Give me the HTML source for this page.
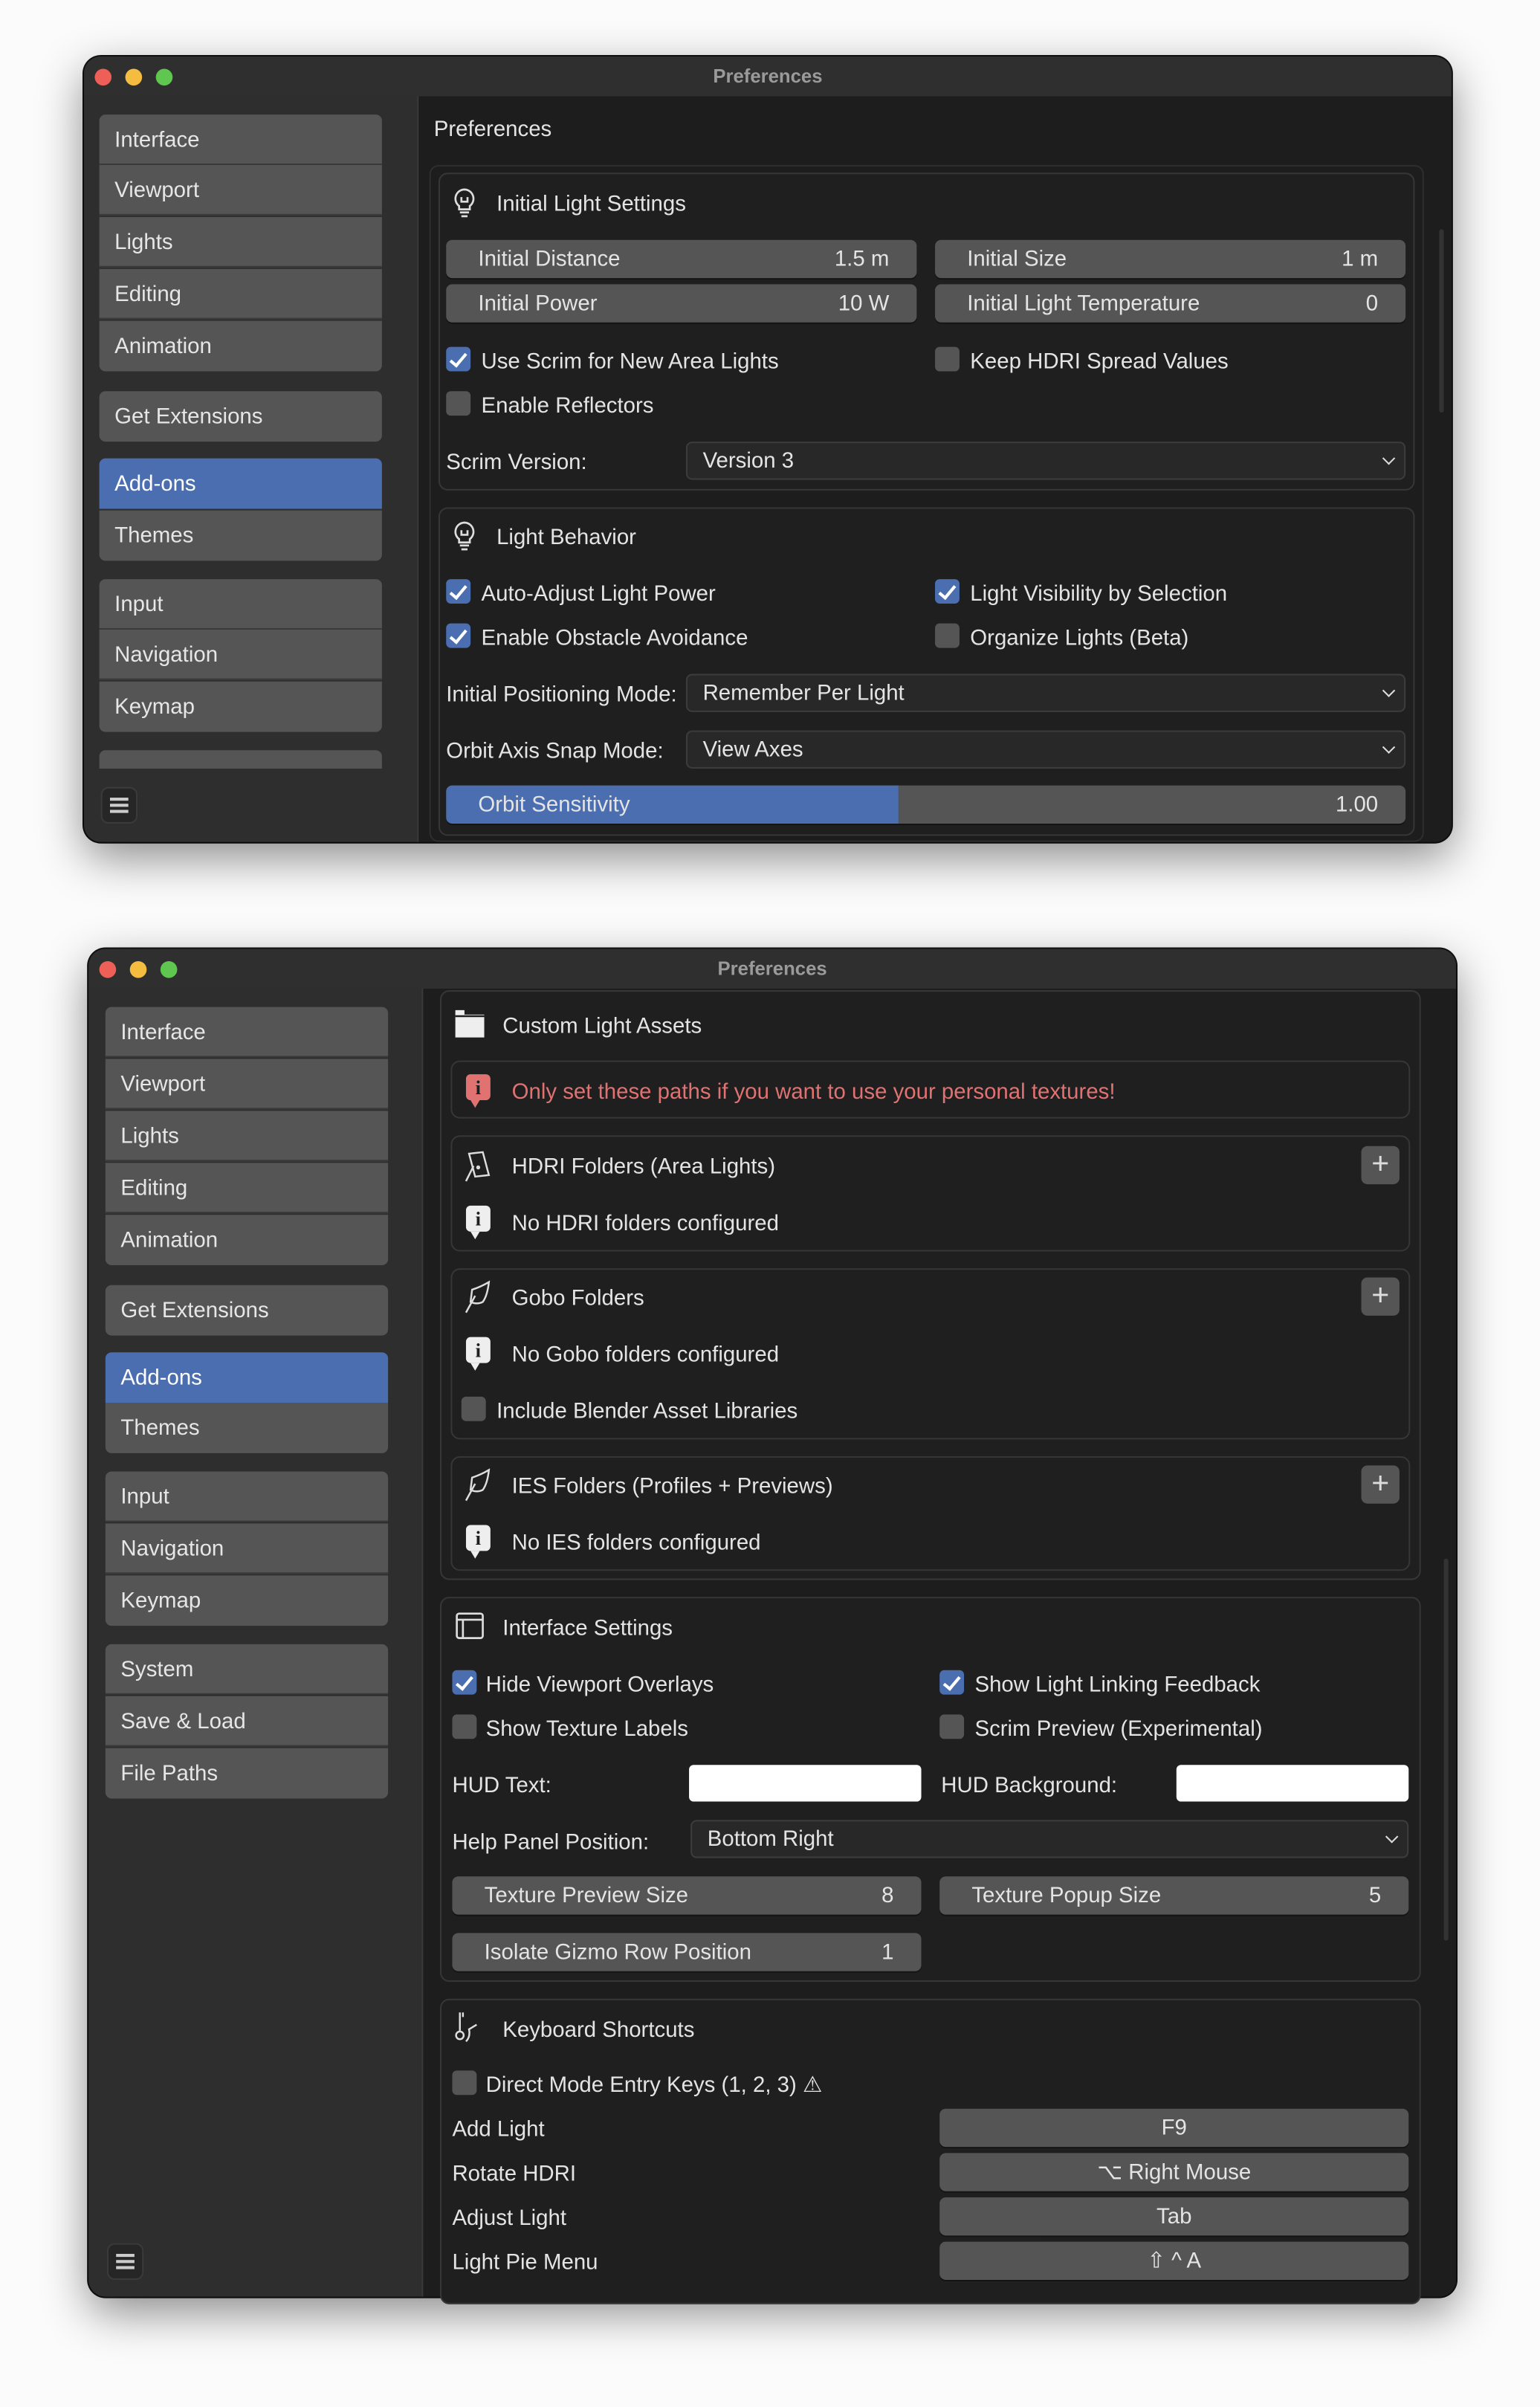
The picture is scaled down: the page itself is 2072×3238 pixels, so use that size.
<!DOCTYPE html>
<html><head><meta charset="utf-8">
<style>
html,body{margin:0;padding:0;background:#fbfbfb;overflow:hidden;width:2072px;height:3237px}
#s{position:absolute;left:0;top:0;width:1008px;height:1575px;transform:scale(2.0556);transform-origin:0 0;font-family:"Liberation Sans",sans-serif;font-size:14.3px;color:#e4e4e4}
.a{position:absolute}
.win{position:absolute;background:#2e2e2e;border-radius:11px;box-shadow:0 10px 30px rgba(0,0,0,.45),0 0 0 1px #111;overflow:hidden}
.tb{position:absolute;left:0;top:0;right:0;height:26px;background:#2f2f2f;text-align:center;line-height:26px;font-weight:bold;font-size:12.5px;color:#9a9a9a}
.dot{position:absolute;top:8px;width:11px;height:11px;border-radius:50%}
.nav{position:absolute;background:#555;height:33px;line-height:35px;padding-left:10px;box-sizing:border-box;color:#e6e6e6;border-bottom:1px solid #3a3a3a}
.sel{background:#4a6eb0;color:#fff}
.main{position:absolute;background:#1d1d1d;border-left:1px solid #3a3a3a}
.pan{position:absolute;border:1px solid #363636;border-radius:6px;background:#1f1f1f;box-sizing:border-box}
.w{position:absolute;background:#555;border-radius:4px;height:25px;line-height:26px;box-sizing:border-box;box-shadow:0 1px 0 #141414}
.w .l{position:absolute;left:21px}
.w .r{position:absolute;right:18px}
.dd{position:absolute;background:#282828;border:1px solid #3c3c3c;border-radius:4px;height:25px;line-height:24px;box-sizing:border-box;padding-left:10px}
.dd:after{content:"";position:absolute;right:7px;top:7px;width:5px;height:5px;border-right:1.5px solid #ddd;border-bottom:1.5px solid #ddd;transform:rotate(45deg)}
.cb{position:absolute;width:16px;height:16px;border-radius:3px;background:#555;box-sizing:border-box}
.cb.on{background:#4a6eb0}
.cb.on:after{content:"";position:absolute;left:5px;top:1.5px;width:4px;height:9px;border-right:2px solid #fff;border-bottom:2px solid #fff;transform:rotate(40deg)}
.t{position:absolute;white-space:nowrap;line-height:18px;margin-top:1.5px}
.kb{position:absolute;left:615px;width:307px;background:#555;border-radius:4px;height:25px;line-height:26px;text-align:center;box-shadow:0 1px 0 #141414}
.plus{position:absolute;width:25px;height:25px;background:#555;border-radius:4px;text-align:center;line-height:24px;font-size:20px;color:#ddd}
.info{position:absolute;width:16px;height:17px;background:#eee;border-radius:3px;color:#1f1f1f;font-weight:bold;font-family:"Liberation Serif",serif;font-size:13px;text-align:center;line-height:17px}
.info:after{content:"";position:absolute;left:3px;bottom:-5px;border-left:3px solid transparent;border-right:3px solid transparent;border-top:5px solid #eee}
.info.red:after{border-top-color:#e07272}
.ham{position:absolute;width:22px;height:22px;border-radius:5px;background:#262626;border:1px solid #3a3a3a}
.ham i{position:absolute;left:5px;width:12px;height:1.5px;background:#ccc}
</style></head><body><div id="s">

<!-- WINDOW 1 -->
<div class="win" style="left:55px;top:37px;width:895px;height:514px">
 <div class="tb">Preferences</div>
 <div class="dot" style="left:7px;background:#ed5f57"></div>
 <div class="dot" style="left:27px;background:#f5bd3f"></div>
 <div class="dot" style="left:47px;background:#5fc74f"></div>
 <div class="main" style="left:218px;top:26px;width:677px;height:488px"></div>
</div>
<div class="nav" style="left:65px;top:75px;width:185px;border-radius:4px 4px 0 0">Interface</div>
<div class="nav" style="left:65px;top:108px;width:185px">Viewport</div>
<div class="nav" style="left:65px;top:142px;width:185px">Lights</div>
<div class="nav" style="left:65px;top:176px;width:185px">Editing</div>
<div class="nav" style="left:65px;top:210px;width:185px;border-radius:0 0 4px 4px;border:0">Animation</div>
<div class="nav" style="left:65px;top:256px;width:185px;border-radius:4px;border:0">Get Extensions</div>
<div class="nav sel" style="left:65px;top:300px;width:185px;border-radius:4px 4px 0 0;border:0">Add-ons</div>
<div class="nav" style="left:65px;top:334px;width:185px;border-radius:0 0 4px 4px;border:0">Themes</div>
<div class="nav" style="left:65px;top:379px;width:185px;border-radius:4px 4px 0 0">Input</div>
<div class="nav" style="left:65px;top:412px;width:185px">Navigation</div>
<div class="nav" style="left:65px;top:446px;width:185px;border-radius:0 0 4px 4px;border:0">Keymap</div>
<div class="nav" style="left:65px;top:491px;width:185px;height:12px;border-radius:4px 4px 0 0;border:0"></div>
<div class="ham" style="left:66px;top:515px"><i style="top:6px"></i><i style="top:10px"></i><i style="top:14px"></i></div>

<div class="t" style="left:284px;top:74px">Preferences</div>
<div class="pan" style="left:281px;top:108px;width:651px;height:443px;background:#1d1d1d;border-color:#2e2e2e"></div>
<div class="pan" style="left:287px;top:113px;width:639px;height:208px"></div>
<svg class="a" style="left:295px;top:122px" width="18" height="22" viewBox="0 0 18 22"><path d="M9 2a6 6 0 0 0-3.5 10.8V15h7v-2.2A6 6 0 0 0 9 2z" fill="none" stroke="#ddd" stroke-width="1.3"/><path d="M6 17h6M7 19.5h4M7 7v3h4V7" stroke="#ddd" stroke-width="1.3" fill="none"/></svg>
<div class="t" style="left:325px;top:123px">Initial Light Settings</div>
<div class="w" style="left:292px;top:157px;width:308px"><span class="l">Initial Distance</span><span class="r">1.5 m</span></div>
<div class="w" style="left:612px;top:157px;width:308px"><span class="l">Initial Size</span><span class="r">1 m</span></div>
<div class="w" style="left:292px;top:186px;width:308px"><span class="l">Initial Power</span><span class="r">10 W</span></div>
<div class="w" style="left:612px;top:186px;width:308px"><span class="l">Initial Light Temperature</span><span class="r">0</span></div>
<div class="cb on" style="left:292px;top:227px"></div><div class="t" style="left:315px;top:226px">Use Scrim for New Area Lights</div>
<div class="cb" style="left:612px;top:227px"></div><div class="t" style="left:635px;top:226px">Keep HDRI Spread Values</div>
<div class="cb" style="left:292px;top:256px"></div><div class="t" style="left:315px;top:255px">Enable Reflectors</div>
<div class="t" style="left:292px;top:292px">Scrim Version:</div>
<div class="dd" style="left:449px;top:289px;width:471px">Version 3</div>

<div class="pan" style="left:287px;top:332px;width:639px;height:215px"></div>
<svg class="a" style="left:295px;top:340px" width="18" height="22" viewBox="0 0 18 22"><path d="M9 2a6 6 0 0 0-3.5 10.8V15h7v-2.2A6 6 0 0 0 9 2z" fill="none" stroke="#ddd" stroke-width="1.3"/><path d="M6 17h6M7 19.5h4M7 7v3h4V7" stroke="#ddd" stroke-width="1.3" fill="none"/></svg>
<div class="t" style="left:325px;top:341px">Light Behavior</div>
<div class="cb on" style="left:292px;top:379px"></div><div class="t" style="left:315px;top:378px">Auto-Adjust Light Power</div>
<div class="cb on" style="left:612px;top:379px"></div><div class="t" style="left:635px;top:378px">Light Visibility by Selection</div>
<div class="cb on" style="left:292px;top:408px"></div><div class="t" style="left:315px;top:407px">Enable Obstacle Avoidance</div>
<div class="cb" style="left:612px;top:408px"></div><div class="t" style="left:635px;top:407px">Organize Lights (Beta)</div>
<div class="t" style="left:292px;top:444px">Initial Positioning Mode:</div>
<div class="dd" style="left:449px;top:441px;width:471px">Remember Per Light</div>
<div class="t" style="left:292px;top:481px">Orbit Axis Snap Mode:</div>
<div class="dd" style="left:449px;top:478px;width:471px">View Axes</div>
<div class="w" style="left:292px;top:514px;width:628px;overflow:hidden"><div class="a" style="left:0;top:0;width:296px;height:25px;background:#4a6eb0"></div><span class="l">Orbit Sensitivity</span><span class="r">1.00</span></div>
<div class="a" style="left:942px;top:150px;width:3px;height:120px;background:#333;border-radius:2px"></div>

<!-- WINDOW 2 -->
<div class="win" style="left:58px;top:621px;width:895px;height:882px">
 <div class="tb">Preferences</div>
 <div class="dot" style="left:7px;background:#ed5f57"></div>
 <div class="dot" style="left:27px;background:#f5bd3f"></div>
 <div class="dot" style="left:47px;background:#5fc74f"></div>
 <div class="main" style="left:218px;top:26px;width:677px;height:856px"></div>
</div>
<div class="nav" style="left:69px;top:659px;width:185px;border-radius:4px 4px 0 0">Interface</div>
<div class="nav" style="left:69px;top:693px;width:185px">Viewport</div>
<div class="nav" style="left:69px;top:727px;width:185px">Lights</div>
<div class="nav" style="left:69px;top:761px;width:185px">Editing</div>
<div class="nav" style="left:69px;top:795px;width:185px;border-radius:0 0 4px 4px;border:0">Animation</div>
<div class="nav" style="left:69px;top:841px;width:185px;border-radius:4px;border:0">Get Extensions</div>
<div class="nav sel" style="left:69px;top:885px;width:185px;border-radius:4px 4px 0 0;border:0">Add-ons</div>
<div class="nav" style="left:69px;top:918px;width:185px;border-radius:0 0 4px 4px;border:0">Themes</div>
<div class="nav" style="left:69px;top:963px;width:185px;border-radius:4px 4px 0 0">Input</div>
<div class="nav" style="left:69px;top:997px;width:185px">Navigation</div>
<div class="nav" style="left:69px;top:1031px;width:185px;border-radius:0 0 4px 4px;border:0">Keymap</div>
<div class="nav" style="left:69px;top:1076px;width:185px;border-radius:4px 4px 0 0">System</div>
<div class="nav" style="left:69px;top:1110px;width:185px">Save &amp; Load</div>
<div class="nav" style="left:69px;top:1144px;width:185px;border-radius:0 0 4px 4px;border:0">File Paths</div>
<div class="ham" style="left:70px;top:1468px"><i style="top:6px"></i><i style="top:10px"></i><i style="top:14px"></i></div>

<div class="pan" style="left:288px;top:648px;width:642px;height:386px"></div>
<svg class="a" style="left:298px;top:661px" width="19" height="18" viewBox="0 0 19 18"><path d="M0 0h6v3h13v15H0z" fill="#eee"/><path d="M0 4h19" stroke="#1f1f1f" stroke-width="1.2"/></svg>
<div class="t" style="left:329px;top:661px">Custom Light Assets</div>
<div class="pan" style="left:295px;top:694px;width:628px;height:38px"></div>
<div class="info red" style="left:305px;top:703px;background:#e07272">i</div>
<div class="t" style="left:335px;top:704px;color:#e07272">Only set these paths if you want to use your personal textures!</div>

<div class="pan" style="left:295px;top:743px;width:628px;height:76px"></div>
<svg class="a" style="left:304px;top:752px" width="18" height="22" viewBox="0 0 18 22"><path d="M3 3l9-1 4 15-9 1z" fill="none" stroke="#ddd" stroke-width="1.2"/><path d="M1 21l5-10" stroke="#ddd" stroke-width="1.2"/><circle cx="9" cy="12" r="1.3" fill="#ddd"/></svg>
<div class="t" style="left:335px;top:753px">HDRI Folders (Area Lights)</div>
<div class="plus" style="left:891px;top:750px">+</div>
<div class="info" style="left:305px;top:789px">i</div>
<div class="t" style="left:335px;top:790px">No HDRI folders configured</div>

<div class="pan" style="left:295px;top:830px;width:628px;height:112px"></div>
<svg class="a" style="left:304px;top:838px" width="18" height="22" viewBox="0 0 18 22"><path d="M5 6q6-2 11-5-1 9-4 13-4 2-8 0z" fill="none" stroke="#ddd" stroke-width="1.2"/><path d="M1 21l6-11" stroke="#ddd" stroke-width="1.2"/></svg>
<div class="t" style="left:335px;top:839px">Gobo Folders</div>
<div class="plus" style="left:891px;top:836px">+</div>
<div class="info" style="left:305px;top:875px">i</div>
<div class="t" style="left:335px;top:876px">No Gobo folders configured</div>
<div class="cb" style="left:302px;top:914px"></div><div class="t" style="left:325px;top:913px">Include Blender Asset Libraries</div>

<div class="pan" style="left:295px;top:953px;width:628px;height:75px"></div>
<svg class="a" style="left:304px;top:961px" width="18" height="22" viewBox="0 0 18 22"><path d="M5 6q6-2 11-5-1 9-4 13-4 2-8 0z" fill="none" stroke="#ddd" stroke-width="1.2"/><path d="M1 21l6-11" stroke="#ddd" stroke-width="1.2"/></svg>
<div class="t" style="left:335px;top:962px">IES Folders (Profiles + Previews)</div>
<div class="plus" style="left:891px;top:959px">+</div>
<div class="info" style="left:305px;top:998px">i</div>
<div class="t" style="left:335px;top:999px">No IES folders configured</div>

<div class="pan" style="left:288px;top:1045px;width:642px;height:252px"></div>
<svg class="a" style="left:298px;top:1055px" width="19" height="18" viewBox="0 0 19 18"><rect x="1" y="1" width="17" height="16" rx="1.5" fill="none" stroke="#ddd" stroke-width="1.3"/><path d="M1 5h17M5 5v12" stroke="#ddd" stroke-width="1.3"/></svg>
<div class="t" style="left:329px;top:1055px">Interface Settings</div>
<div class="cb on" style="left:296px;top:1093px"></div><div class="t" style="left:318px;top:1092px">Hide Viewport Overlays</div>
<div class="cb on" style="left:615px;top:1093px"></div><div class="t" style="left:638px;top:1092px">Show Light Linking Feedback</div>
<div class="cb" style="left:296px;top:1122px"></div><div class="t" style="left:318px;top:1121px">Show Texture Labels</div>
<div class="cb" style="left:615px;top:1122px"></div><div class="t" style="left:638px;top:1121px">Scrim Preview (Experimental)</div>
<div class="t" style="left:296px;top:1158px">HUD Text:</div>
<div class="a" style="left:451px;top:1155px;width:152px;height:24px;background:#fff;border-radius:3px"></div>
<div class="t" style="left:616px;top:1158px">HUD Background:</div>
<div class="a" style="left:770px;top:1155px;width:152px;height:24px;background:#fff;border-radius:3px"></div>
<div class="t" style="left:296px;top:1195px">Help Panel Position:</div>
<div class="dd" style="left:452px;top:1191px;width:470px">Bottom Right</div>
<div class="w" style="left:296px;top:1228px;width:307px"><span class="l">Texture Preview Size</span><span class="r">8</span></div>
<div class="w" style="left:615px;top:1228px;width:307px"><span class="l">Texture Popup Size</span><span class="r">5</span></div>
<div class="w" style="left:296px;top:1265px;width:307px"><span class="l">Isolate Gizmo Row Position</span><span class="r">1</span></div>

<div class="pan" style="left:288px;top:1308px;width:642px;height:200px"></div>
<svg class="a" style="left:297px;top:1316px" width="20" height="22" viewBox="0 0 20 22"><path d="M4 1v12M6 1v3" stroke="#ddd" stroke-width="1.2"/><circle cx="4" cy="16" r="2.5" fill="none" stroke="#ddd" stroke-width="1.2"/><path d="M8 20q3-3 2-8l5-3" fill="none" stroke="#ddd" stroke-width="1.2"/></svg>
<div class="t" style="left:329px;top:1318px">Keyboard Shortcuts</div>
<div class="cb" style="left:296px;top:1355px"></div><div class="t" style="left:318px;top:1354px">Direct Mode Entry Keys (1, 2, 3) ⚠</div>
<div class="t" style="left:296px;top:1383px">Add Light</div><div class="kb" style="top:1380px">F9</div>
<div class="t" style="left:296px;top:1412px">Rotate HDRI</div><div class="kb" style="top:1409px">⌥ Right Mouse</div>
<div class="t" style="left:296px;top:1441px">Adjust Light</div><div class="kb" style="top:1438px">Tab</div>
<div class="t" style="left:296px;top:1470px">Light Pie Menu</div><div class="kb" style="top:1467px">⇧ ^ A</div>
<div class="a" style="left:945px;top:1020px;width:3px;height:250px;background:#333;border-radius:2px"></div>

</div></body></html>
